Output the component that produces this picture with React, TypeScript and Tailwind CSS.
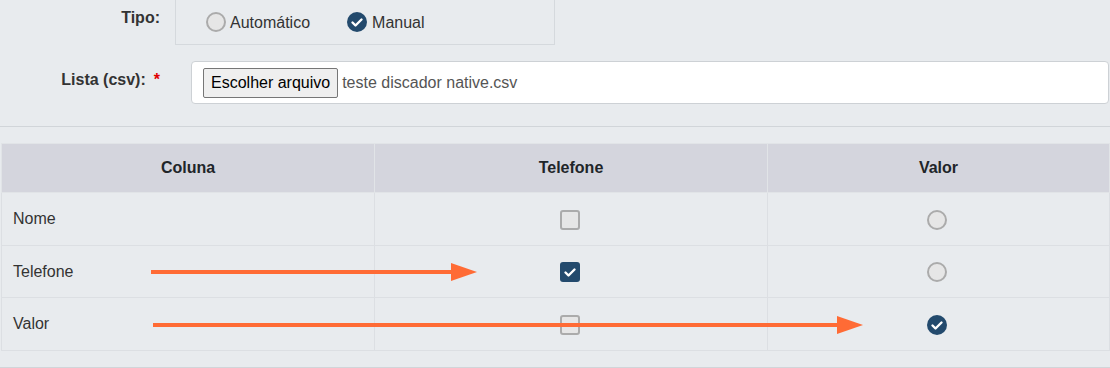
import React from 'react';

const NAVY = 'bg-[#234a6d]';

const Check: React.FC = () => (
  <svg viewBox="0 0 20 20" className="w-full h-full">
    <polyline points="5.5,10.5 8.5,13.5 14.5,7.5" fill="none" stroke="#fff" strokeWidth="2.4" strokeLinecap="round" strokeLinejoin="round" />
  </svg>
);

const Radio: React.FC<{ checked?: boolean }> = ({ checked }) =>
  checked ? (
    <span className={`inline-block w-[20px] h-[20px] rounded-full ${NAVY}`}>
      <Check />
    </span>
  ) : (
    <span className="inline-block w-[20px] h-[20px] rounded-full border-2 border-[#ababab] bg-[#e6e6e6]" />
  );

const Checkbox: React.FC<{ checked?: boolean }> = ({ checked }) =>
  checked ? (
    <span className={`inline-block w-[20px] h-[20px] rounded-[3px] ${NAVY}`}>
      <Check />
    </span>
  ) : (
    <span className="inline-block w-[20px] h-[20px] rounded-[3px] border-2 border-[#ababab] bg-[#e6e6e6]" />
  );

const rows = [
  { name: 'Nome', phone: false, value: false, h: 'h-[53px]' },
  { name: 'Telefone', phone: true, value: false, h: 'h-[52px]' },
  { name: 'Valor', phone: false, value: true, h: 'h-[53px]' },
];

const App: React.FC = () => {
  return (
    <div className="relative w-[1110px] h-[368px] overflow-hidden bg-[#e8ebee] text-[16px] leading-6 text-[#333] font-['Liberation_Sans',Arial,sans-serif]">
      {/* Tipo */}
      <div className="flex">
        <div className="w-[160px] text-right font-bold mt-[6px]">Tipo:</div>
        <div className="ml-[15px] -mt-px w-[380px] h-[46px] border border-[#d5d9dd] flex items-center pl-[30px]">
          <label className="flex items-center gap-[4px]">
            <Radio />
            <span className="mt-[2px]">Automático</span>
          </label>
          <label className="flex items-center gap-[5px] ml-[37px]">
            <Radio checked />
            <span className="mt-[2px]">Manual</span>
          </label>
        </div>
      </div>

      {/* Lista */}
      <div className="flex mt-[16px]">
        <div className="w-[160px] text-right font-bold pt-[7px]">
          Lista (csv):<span className="ml-[8px] text-[#e00000]">*</span>
        </div>
        <div className="ml-[31px] w-[918px] h-[43px] bg-white border border-[#cdd1d5] rounded-[4px] flex items-center pl-[11px]">
          <button className="h-[30px] px-[7px] bg-[#efefef] border border-[#767676] rounded-[2px] text-black leading-none">
            Escolher arquivo
          </button>
          <span className="ml-[4px] text-[#555]">teste discador native.csv</span>
        </div>
      </div>

      <div className="mt-[22px] border-t border-[#d1d5d9]" />

      {/* Tabela */}
      <table className="mt-[16px] ml-px w-[1108px] table-fixed border-collapse">
        <colgroup>
          <col className="w-[373px]" />
          <col className="w-[393px]" />
          <col className="w-[342px]" />
        </colgroup>
        <thead>
          <tr className="bg-[#d4d5dd]">
            {['Coluna', 'Telefone', 'Valor'].map(h => (
              <th key={h} className="h-[49px] border border-[#e1e4e7] font-bold text-[#212529] text-center">{h}</th>
            ))}
          </tr>
        </thead>
        <tbody>
          {rows.map(r => (
            <tr key={r.name}>
              <td className={`${r.h} border border-[#dcdfe3] pl-[11px]`}>{r.name}</td>
              <td className={`${r.h} border border-[#dcdfe3] text-center pr-[3px]`}>
                <span className="inline-flex align-middle"><Checkbox checked={r.phone} /></span>
              </td>
              <td className={`${r.h} border border-[#dcdfe3] text-center pr-[3px]`}>
                <span className="inline-flex align-middle"><Radio checked={r.value} /></span>
              </td>
            </tr>
          ))}
        </tbody>
      </table>

      <div className="mt-[16px] border-t border-[#d1d5d9]" />

      {/* setas de anotação */}
      <svg className="absolute inset-0 pointer-events-none" width="1110" height="368">
        <rect x="151" y="270" width="302" height="4" fill="#ff6b35" />
        <polygon points="451,263 477,272 451,281" fill="#ff6b35" />
        <rect x="153" y="323" width="686" height="4" fill="#ff6b35" />
        <polygon points="837,316 863,325 837,334" fill="#ff6b35" />
      </svg>
    </div>
  );
};

export default App;
